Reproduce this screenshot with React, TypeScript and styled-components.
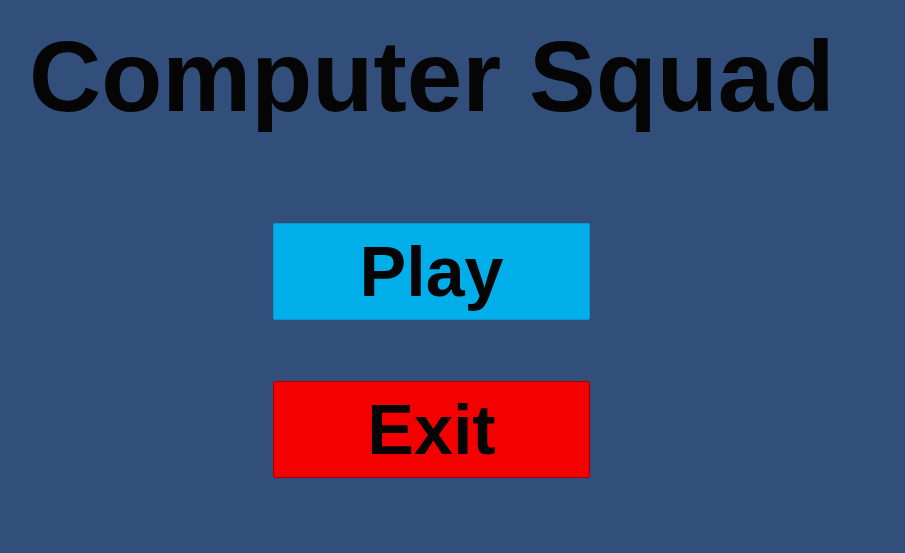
import React from "react";
import styled, { createGlobalStyle } from "styled-components";

const GlobalStyle = createGlobalStyle`
  html, body {
    margin: 0;
    padding: 0;
    background: #324e7a;
  }
  body {
    font-family: "Liberation Sans", Arial, sans-serif;
  }
`;

const Screen = styled.main`
  width: 905px;
  height: 553px;
  background: #324e7a;
  display: flex;
  flex-direction: column;
  overflow: hidden;
`;

const Title = styled.h1`
  margin: 26px 0 0 29px;
  font-size: 100px;
  line-height: 100px;
  font-weight: 700;
  color: #050505;
  white-space: nowrap;
`;

const Menu = styled.nav`
  margin: 97px 0 0 273px;
  display: flex;
  flex-direction: column;
  gap: 61px;
`;

const MenuButton = styled.button<{ $bg: string; $edge: string }>`
  width: 317px;
  height: 97px;
  padding: 0;
  box-sizing: border-box;
  border: 1px solid ${(p) => p.$edge};
  border-radius: 2px;
  background: ${(p) => p.$bg};
  color: #050505;
  font-family: "Liberation Sans", Arial, sans-serif;
  font-weight: 700;
  font-size: 70px;
  line-height: 1;
  display: flex;
  align-items: center;
  justify-content: center;
  cursor: pointer;
`;

export default function App() {
  return (
    <>
      <GlobalStyle />
      <Screen>
        <Title>Computer Squad</Title>
        <Menu>
          <MenuButton $bg="#00aee9" $edge="#0a98cc">Play</MenuButton>
          <MenuButton $bg="#f50000" $edge="#a80000">Exit</MenuButton>
        </Menu>
      </Screen>
    </>
  );
}
